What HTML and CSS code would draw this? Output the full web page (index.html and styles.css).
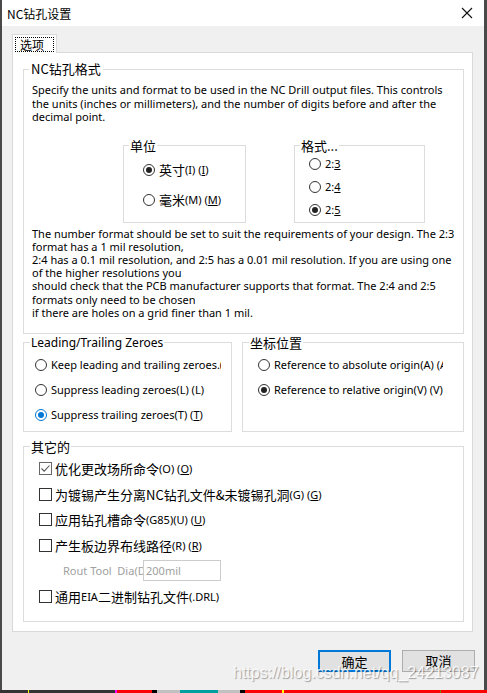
FILE: index.html
```html
<!DOCTYPE html>
<html lang="zh">
<head>
    <meta charset="UTF-8">
    <meta name="viewport" content="width=device-width, initial-scale=1.0">
    <title>NC钻孔设置</title>
    <link rel="stylesheet" href="styles.css">
</head>
<body>

<div class="window">
    <div class="titlebar">
        <span class="title">NC钻孔设置</span>
        <svg class="close" width="12" height="12" viewBox="0 0 12 12">
            <path d="M1 1L11 11M11 1L1 11" stroke="#111" stroke-width="1.1" fill="none"/>
        </svg>
    </div>

    <div class="client">
        <div class="tabs">
            <div class="tab"><span class="focus">选项</span></div>
        </div>

        <div class="panel">
            <!-- NC drill format -->
            <fieldset class="group">
                <legend class="cjk">NC钻孔格式</legend>
                <p class="desc">Specify the units and format to be used in the NC Drill output files. This controls<br>
                    the units (inches or millimeters), and the number of digits before and after the<br>
                    decimal point.</p>

                <div class="choice-row">
                    <fieldset class="box units">
                        <legend class="cjk">单位</legend>
                        <div class="opts">
                            <div class="opt"><span class="radio on"></span><span class="cjk">英寸</span><span class="hk">(I) (<u>I</u>)</span></div>
                            <div class="opt"><span class="radio"></span><span class="cjk">毫米</span><span class="hk">(M) (<u>M</u>)</span></div>
                        </div>
                    </fieldset>
                    <fieldset class="box formats">
                        <legend class="cjk">格式...</legend>
                        <div class="opts">
                            <div class="opt"><span class="radio"></span><span class="hk">2:<u>3</u></span></div>
                            <div class="opt"><span class="radio"></span><span class="hk">2:<u>4</u></span></div>
                            <div class="opt"><span class="radio on"></span><span class="hk">2:<u>5</u></span></div>
                        </div>
                    </fieldset>
                </div>

                <p class="desc note">The number format should be set to suit the requirements of your design. The 2:3<br>
                    format has a 1 mil resolution,<br>
                    2:4 has a 0.1 mil resolution, and 2:5 has a 0.01 mil resolution. If you are using one<br>
                    of the higher resolutions you<br>
                    should check that the PCB manufacturer supports that format. The 2:4 and 2:5<br>
                    formats only need to be chosen<br>
                    if there are holes on a grid finer than 1 mil.</p>
            </fieldset>

            <div class="pair">
                <fieldset class="group zeroes">
                    <legend>Leading/Trailing Zeroes</legend>
                    <div class="opts">
                        <div class="opt"><span class="radio"></span><span class="clip">Keep leading and trailing zeroes.(K) (K)</span></div>
                        <div class="opt"><span class="radio"></span><span class="clip">Suppress leading zeroes(L) (L)</span></div>
                        <div class="opt"><span class="radio on focus-blue"></span><span class="clip">Suppress trailing zeroes(T) (<u>T</u>)</span></div>
                    </div>
                </fieldset>
                <fieldset class="group origin">
                    <legend class="cjk">坐标位置</legend>
                    <div class="opts">
                        <div class="opt"><span class="radio"></span><span class="clip">Reference to absolute origin(A) (A)</span></div>
                        <div class="opt"><span class="radio on"></span><span class="clip">Reference to relative origin(V) (V)</span></div>
                    </div>
                </fieldset>
            </div>

            <!-- other options -->
            <fieldset class="group misc">
                <legend class="cjk">其它的</legend>
                <div class="opts">
                    <div class="opt"><span class="check on"><svg width="11" height="11" viewBox="0 0 11 11"><path d="M1.5 5.5L4.2 8.2L9.5 2.5" stroke="#555" stroke-width="1.1" fill="none"/></svg></span><span class="cjk">优化更改场所命令</span><span class="hk">(O) (<u>O</u>)</span></div>
                    <div class="opt"><span class="check"></span><span class="cjk">为镀锡产生分离NC钻孔文件&amp;未镀锡孔洞</span><span class="hk">(G) (<u>G</u>)</span></div>
                    <div class="opt"><span class="check"></span><span class="cjk">应用钻孔槽命令</span><span class="hk">(G85)(U) (<u>U</u>)</span></div>
                    <div class="opt"><span class="check"></span><span class="cjk">产生板边界布线路径</span><span class="hk">(R) (<u>R</u>)</span></div>
                    <div class="opt rout">
                        <span class="rout-label">Rout Tool  Dia(D)</span>
                        <span class="rout-input">200mil</span>
                    </div>
                    <div class="opt"><span class="check"></span><span class="cjk">通用</span><span class="hk">EIA</span><span class="cjk">二进制钻孔文件</span><span class="hk">(.DRL)</span></div>
                </div>
            </fieldset>
        </div>

        <div class="buttons">
            <button class="btn default">确定</button>
            <button class="btn">取消</button>
        </div>
    </div>

    <div class="watermark">https://blog.csdn.net/qq_24213087</div>
</div>

<div class="taskbar">
    <span style="width:28px" class="seg-dark"></span>
    <span style="width:1px" class="seg-yellow"></span>
    <span style="width:86px" class="seg-dark"></span>
    <span style="width:2px" class="seg-magenta"></span>
    <span style="width:35px" class="seg-red"></span>
    <span style="width:5px" class="seg-black"></span>
    <span style="width:23px" class="seg-grey"></span>
    <span style="width:38px" class="seg-teal"></span>
    <span style="width:22px" class="seg-grey"></span>
    <span style="width:5px" class="seg-black"></span>
    <span style="width:37px" class="seg-red"></span>
    <span style="width:2px" class="seg-yellow"></span>
    <span style="width:156px" class="seg-red"></span>
    <span style="width:1px" class="seg-olive"></span>
    <span style="width:46px" class="seg-red"></span>
</div>

</body>
</html>
```
FILE: styles.css
```css
body {
    margin: 0;
    padding: 0;
    background-color: #4a4a4a;
    font-family: "Noto Sans", "Noto Sans CJK SC", sans-serif;
    font-size: 11px;
    color: #000;
    width: 487px;
    height: 693px;
    overflow: hidden;
}

.cjk {
    font-family: "Noto Sans CJK SC", sans-serif;
    font-size: 13px;
}

.window {
    position: relative;
    margin-left: 2px;
    width: 482px;
    height: 690px;
    background-color: #f0f0f0;
}

/* Title bar */
.titlebar {
    height: 26px;
    background-color: #fff;
    display: flex;
    align-items: center;
    justify-content: space-between;
    padding: 0 11px 0 5px;
    box-sizing: border-box;
}
.title {
    font-family: "Noto Sans CJK SC", sans-serif;
    font-size: 12px;
}

.client {
    padding: 8px 11px 0 10px;
}

/* Tab strip */
.tabs {
    display: flex;
    height: 18px;
}
.tab {
    position: relative;
    z-index: 1;
    height: 19px;
    padding: 2px 2px 0 2px;
    box-sizing: border-box;
    background-color: #fff;
    border: 1px solid #d9d9d9;
    border-bottom: none;
}
.tab .focus {
    display: block;
    height: 15px;
    line-height: 14px;
    padding: 0 9px 0 4px;
    border: 1px dotted #000;
    box-sizing: border-box;
    font-family: "Noto Sans CJK SC", sans-serif;
    font-size: 12px;
}

.panel {
    background-color: #fff;
    border: 1px solid #d9d9d9;
    padding: 8px 8px 9px 10px;
}

/* Group boxes */
fieldset {
    margin: 0;
    min-width: 0;
    border: 1px solid #dcdcdc;
    box-sizing: border-box;
}
legend {
    line-height: 16px;
    font-size: 12px;
    padding: 0 2px;
    margin-left: -3px;
}
legend.cjk {
    font-size: 13px;
}
.group {
    width: 441px;
    padding: 6px 8px 14px 8px;
}

.desc {
    margin: 0;
    line-height: 13.5px;
    white-space: nowrap;
}
.desc.note {
    margin-top: 4px;
    line-height: 13.2px;
}

.choice-row {
    display: flex;
    gap: 48px;
    margin: 14px 0 0 91px;
}
.box legend {
    padding: 0 1px;
    margin-left: -1px;
}
.units {
    width: 123px;
    padding: 6px 0 12px 6px;
}
.units .opts {
    gap: 10px;
    padding-left: 13px;
}
.formats {
    width: 131px;
    padding: 0 0 2px 6px;
}
.formats .opts {
    gap: 3px;
    padding-left: 8px;
}

.opts {
    display: flex;
    flex-direction: column;
}
.opt {
    display: flex;
    align-items: center;
    height: 20px;
    white-space: nowrap;
}
.hk {
    font-size: 11px;
}

/* Radio buttons and checkboxes */
.radio {
    width: 12px;
    height: 12px;
    border: 1px solid #333;
    border-radius: 50%;
    box-sizing: border-box;
    background-color: #fff;
    margin-right: 4px;
    display: flex;
    align-items: center;
    justify-content: center;
    flex-shrink: 0;
}
.radio.on::after {
    content: "";
    width: 6px;
    height: 6px;
    border-radius: 50%;
    background-color: #222;
}
.radio.focus-blue {
    border-color: #0078d7;
}
.radio.focus-blue::after {
    background-color: #0078d7;
}

.check {
    width: 13px;
    height: 13px;
    border: 1px solid #333;
    box-sizing: border-box;
    background-color: #fff;
    margin-right: 3px;
    display: flex;
    align-items: center;
    justify-content: center;
    flex-shrink: 0;
}
.check.on {
    border-color: #666;
}

/* Leading / trailing zeroes + origin */
.pair {
    display: flex;
    gap: 10px;
    margin-top: 1px;
}
.pair .group {
    padding: 4px 0 6px 7px;
}
.pair legend {
    padding: 0 1px;
    margin-left: -1px;
}
.pair .opts {
    gap: 5px;
}
.zeroes {
    width: 209px !important;
}
.zeroes .opts {
    padding-left: 4px;
}
.zeroes .clip {
    width: 170px;
    overflow: hidden;
}
.origin {
    width: 222px !important;
}
.origin .opts {
    padding-left: 8px;
}
.origin .clip {
    width: 169px;
    overflow: hidden;
}

/* Other options */
.misc {
    margin-top: 7px;
    padding: 3px 0 14px 7px !important;
}
.misc legend {
    padding: 0 1px;
    margin-left: -1px;
}
.misc .opts {
    gap: 4.6px;
    padding-left: 8px;
}
.misc .opt {
    height: 21px;
}
.rout {
    padding-left: 24px;
}
.rout-label {
    width: 80px;
    overflow: hidden;
    white-space: pre;
    color: #a0a0a0;
    font-size: 11px;
}
.rout-input {
    width: 78px;
    height: 21px;
    box-sizing: border-box;
    border: 1px solid #cccccc;
    background-color: #fff;
    color: #a0a0a0;
    font-size: 11px;
    line-height: 19px;
    padding-left: 2px;
}

/* Dialog buttons */
.buttons {
    display: flex;
    justify-content: flex-end;
    gap: 11px;
    padding-top: 18px;
    margin-right: -2px;
}
.btn {
    width: 73px;
    height: 22px;
    margin: 0;
    padding: 0;
    background-color: #e1e1e1;
    border: 1px solid #adadad;
    font-family: "Noto Sans CJK SC", sans-serif;
    font-size: 13px;
    color: #000;
}
.btn.default {
    border: 2px solid #0078d7;
}

.watermark {
    position: absolute;
    left: 231px;
    top: 664px;
    font-family: "Liberation Sans", sans-serif;
    font-size: 16px;
    line-height: 18px;
    color: rgba(255, 255, 255, 0.85);
    text-shadow: 1px 1px 1px rgba(0, 0, 0, 0.35);
    white-space: nowrap;
}

/* Desktop strip under the dialog */
.taskbar {
    display: flex;
    height: 3px;
}
.taskbar span {
    display: block;
    height: 3px;
}
.seg-dark { background-color: #333; }
.seg-yellow { background-color: #ffff00; }
.seg-magenta { background-color: #ff00ff; }
.seg-red { background-color: #ff0000; }
.seg-black { background-color: #000; }
.seg-grey { background-color: #c0c0c0; }
.seg-teal { background-color: #00a0a0; }
.seg-olive { background-color: #808000; }
```
